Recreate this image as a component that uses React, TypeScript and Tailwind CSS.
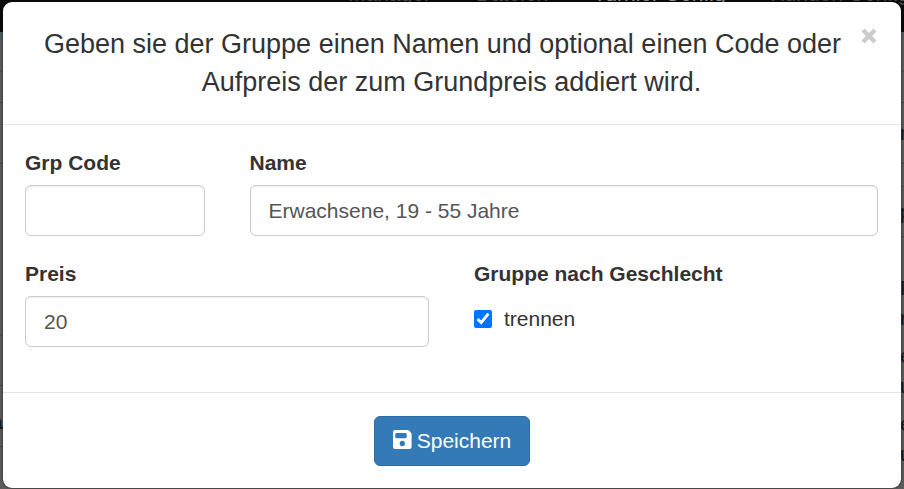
import { useState } from "react";

const navItems = ["Manager", "Dateien", "Turnier Config", "Kunden Config"];

// Left and right columns of the page that lies behind the dialog
const leftRows = [
  { height: "h-[31px]", text: "" },
  { height: "h-[31px]", text: "" },
  { height: "h-[61px]", text: "" },
  { height: "h-[172px]", text: "" },
  { height: "h-[50px]", text: "" },
  { height: "h-[61px]", text: "a" },
];

const rightRows = [
  { height: "h-[31px]", text: "" },
  { height: "h-[31px]", text: "" },
  { height: "h-[61px]", text: "n" },
  { height: "h-[23px]", text: "" },
  { height: "h-[50px]", text: "p" },
];

const rightBlocks = [
  ["R", "r"],
  ["e", "u"],
  ["e", "u"],
];

const inputClass =
  "mt-[7px] block h-[51px] w-full rounded-md border border-[#ccc] bg-white px-[18px] text-[21px] text-[#555] shadow-[inset_0_1px_2px_rgba(0,0,0,0.08)] outline-none focus:border-[#66afe9]";

function SaveIcon() {
  return (
    <svg viewBox="0 0 19 19" className="mb-[3px] size-[19px]" fill="currentColor" aria-hidden="true">
      <path
        fillRule="evenodd"
        d="M2 0H14.5Q15.4 0 16 .6L18 2.8Q18.6 3.4 18.6 4.3V17a2 2 0 0 1-2 2H2a2 2 0 0 1-2-2V2a2 2 0 0 1 2-2ZM3.6 3A1.3 1.3 0 0 0 2.3 4.3V7A1.3 1.3 0 0 0 3.6 8.3H12.4A1.3 1.3 0 0 0 13.7 7V4.3A1.3 1.3 0 0 0 12.4 3ZM9.3 10.8a2.6 2.6 0 1 0 0 5.2a2.6 2.6 0 0 0 0-5.2Z"
      />
    </svg>
  );
}

function CloseIcon() {
  return (
    <svg viewBox="0 0 16 16" className="size-4" stroke="currentColor" strokeWidth="4.4" aria-hidden="true">
      <path d="M2 2L14 14M14 2L2 14" />
    </svg>
  );
}

function Background() {
  return (
    <div className="h-full overflow-hidden bg-[#5c5c5c]" aria-hidden="true">
      <div className="flex h-8 items-start bg-[#0b0b0b]">
        <div className="-mt-[21px] flex gap-[45px] pl-[348px] leading-[30px] whitespace-nowrap text-[#4e4e4e]">
          {navItems.map((item) => (
            <span key={item} className={item === "Turnier Config" ? "text-[#9a9a9a]" : ""}>
              {item}
            </span>
          ))}
        </div>
      </div>
      <div className="h-[9px] bg-[#4d5c5e]" />
      <div className="flex text-[#151a20]">
        <div className="flex-1 font-bold">
          {leftRows.map((row, i) => (
            <div key={i} className={`flex items-center border-b border-[#4a4a4a] ${row.height}`}>
              <span className="-ml-[9px] pt-3">{row.text}</span>
            </div>
          ))}
        </div>
        <div className="w-1">
          {rightRows.map((row, i) => (
            <div key={i} className={`flex items-center border-b border-[#4a4a4a] ${row.height}`}>
              {row.text}
            </div>
          ))}
          <div className="space-y-2 pt-9">
            {rightBlocks.map((block, i) => (
              <div key={i}>
                {block.map((text) => (
                  <p key={text}>{text}</p>
                ))}
              </div>
            ))}
          </div>
        </div>
      </div>
    </div>
  );
}

export default function App() {
  const [code, setCode] = useState("");
  const [name, setName] = useState("Erwachsene, 19 - 55 Jahre");
  const [price, setPrice] = useState("20");
  const [split, setSplit] = useState(true);

  return (
    <div className="relative h-screen overflow-hidden font-['Liberation_Sans',Arial,sans-serif] text-[21px] leading-[30px] text-[#333]">
      <Background />

      {/* Dialog */}
      <div className="absolute inset-0 px-[3px] pt-[2px]">
        <form
          role="dialog"
          aria-labelledby="dialog-title"
          className="rounded-[9px] bg-white shadow-[0_0_3px_rgba(0,0,0,0.6)]"
          onSubmit={(e) => e.preventDefault()}
        >
          <header className="border-b border-[#e5e5e5] py-[23px] pr-6 pl-[23px]">
            <button type="button" aria-label="Schließen" className="float-right mt-[3px] pl-[2px] text-[#ccc]">
              <CloseIcon />
            </button>
            <h4 id="dialog-title" className="text-center text-[27px] leading-[38px]">
              Geben sie der Gruppe einen Namen und optional einen Code oder Aufpreis der zum Grundpreis addiert wird.
            </h4>
          </header>

          <div className="grid grid-cols-4 gap-x-[45px] gap-y-[23px] border-b border-[#e5e5e5] pt-[23px] pr-[23px] pb-[45px] pl-[22px]">
            <div>
              <label htmlFor="code" className="block font-bold">Grp Code</label>
              <input id="code" type="text" className={inputClass} value={code} onChange={(e) => setCode(e.target.value)} />
            </div>
            <div className="col-span-3">
              <label htmlFor="name" className="block font-bold">Name</label>
              <input id="name" type="text" className={inputClass} value={name} onChange={(e) => setName(e.target.value)} />
            </div>
            <div className="col-span-2">
              <label htmlFor="price" className="block font-bold">Preis</label>
              <input id="price" type="text" className={inputClass} value={price} onChange={(e) => setPrice(e.target.value)} />
            </div>
            <fieldset className="col-span-2">
              <legend className="font-bold">Gruppe nach Geschlecht</legend>
              <label className="mt-[15px] flex items-center gap-3">
                <input
                  type="checkbox"
                  className="size-[18px] accent-[#0075ff]"
                  checked={split}
                  onChange={(e) => setSplit(e.target.checked)}
                />
                trennen
              </label>
            </fieldset>
          </div>

          <footer className="flex justify-center px-[22px] pt-[23px] pb-[22px]">
            <button
              type="submit"
              className="flex h-[50px] items-center gap-[5px] rounded-md border border-[#2e6da4] bg-[#337ab7] px-[18px] text-white"
            >
              <SaveIcon />
              Speichern
            </button>
          </footer>
        </form>
      </div>
    </div>
  );
}
